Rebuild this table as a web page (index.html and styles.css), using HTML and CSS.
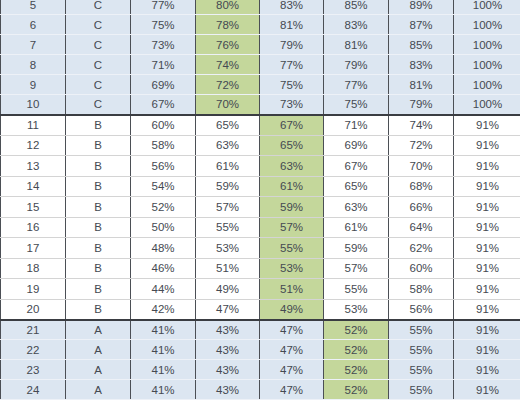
FILE: index.html
```html
<!DOCTYPE html>
<html>
<head>
<meta charset="utf-8">
<link rel="stylesheet" href="styles.css">
</head>
<body>
<div class="sheet">
<table class="grid">
<colgroup>
<col class="c1"><col class="c2"><col class="c3"><col class="c4"><col class="c5"><col class="c6"><col class="c7"><col class="c8">
</colgroup>
<tbody class="band band-c">
<tr><td>5</td><td>C</td><td>77%</td><td class="hi">80%</td><td>83%</td><td>85%</td><td>89%</td><td>100%</td></tr>
<tr><td>6</td><td>C</td><td>75%</td><td class="hi">78%</td><td>81%</td><td>83%</td><td>87%</td><td>100%</td></tr>
<tr><td>7</td><td>C</td><td>73%</td><td class="hi">76%</td><td>79%</td><td>81%</td><td>85%</td><td>100%</td></tr>
<tr><td>8</td><td>C</td><td>71%</td><td class="hi">74%</td><td>77%</td><td>79%</td><td>83%</td><td>100%</td></tr>
<tr><td>9</td><td>C</td><td>69%</td><td class="hi">72%</td><td>75%</td><td>77%</td><td>81%</td><td>100%</td></tr>
<tr><td>10</td><td>C</td><td>67%</td><td class="hi">70%</td><td>73%</td><td>75%</td><td>79%</td><td>100%</td></tr>
</tbody>
<tbody class="band band-b">
<tr><td>11</td><td>B</td><td>60%</td><td>65%</td><td class="hi">67%</td><td>71%</td><td>74%</td><td>91%</td></tr>
<tr><td>12</td><td>B</td><td>58%</td><td>63%</td><td class="hi">65%</td><td>69%</td><td>72%</td><td>91%</td></tr>
<tr><td>13</td><td>B</td><td>56%</td><td>61%</td><td class="hi">63%</td><td>67%</td><td>70%</td><td>91%</td></tr>
<tr><td>14</td><td>B</td><td>54%</td><td>59%</td><td class="hi">61%</td><td>65%</td><td>68%</td><td>91%</td></tr>
<tr><td>15</td><td>B</td><td>52%</td><td>57%</td><td class="hi">59%</td><td>63%</td><td>66%</td><td>91%</td></tr>
<tr><td>16</td><td>B</td><td>50%</td><td>55%</td><td class="hi">57%</td><td>61%</td><td>64%</td><td>91%</td></tr>
<tr><td>17</td><td>B</td><td>48%</td><td>53%</td><td class="hi">55%</td><td>59%</td><td>62%</td><td>91%</td></tr>
<tr><td>18</td><td>B</td><td>46%</td><td>51%</td><td class="hi">53%</td><td>57%</td><td>60%</td><td>91%</td></tr>
<tr><td>19</td><td>B</td><td>44%</td><td>49%</td><td class="hi">51%</td><td>55%</td><td>58%</td><td>91%</td></tr>
<tr><td>20</td><td>B</td><td>42%</td><td>47%</td><td class="hi">49%</td><td>53%</td><td>56%</td><td>91%</td></tr>
</tbody>
<tbody class="band band-a">
<tr><td>21</td><td>A</td><td>41%</td><td>43%</td><td>47%</td><td class="hi">52%</td><td>55%</td><td>91%</td></tr>
<tr><td>22</td><td>A</td><td>41%</td><td>43%</td><td>47%</td><td class="hi">52%</td><td>55%</td><td>91%</td></tr>
<tr><td>23</td><td>A</td><td>41%</td><td>43%</td><td>47%</td><td class="hi">52%</td><td>55%</td><td>91%</td></tr>
<tr><td>24</td><td>A</td><td>41%</td><td>43%</td><td>47%</td><td class="hi">52%</td><td>55%</td><td>91%</td></tr>
</tbody>
</table>
</div>
</body>
</html>
```

FILE: styles.css
```css
html, body {
  margin: 0;
  padding: 0;
  background: #ffffff;
}

.sheet {
  width: 520px;
  height: 400px;
  overflow: hidden;
}

.grid {
  margin-top: -6px;
  border-collapse: collapse;
  table-layout: fixed;
  width: 521px;
  font-family: "Liberation Sans", Arial, sans-serif;
  font-size: 11.5px;
  color: #454a52;
}

.c1, .c2, .c3 { width: 65px; }
.c4, .c5 { width: 64px; }
.c6, .c7 { width: 65px; }
.c8 { width: 68px; }

.grid tr {
  height: 20px;
}

.band-b tr {
  height: 20.5px;
}

.grid td {
  padding: 0;
  text-align: center;
  vertical-align: middle;
  line-height: 14px;
  border-left: 1px solid #4b4f55;
  border-right: 1px solid #4b4f55;
  border-top: 1px solid #d4d4d4;
  border-bottom: 1px solid #d4d4d4;
}

.band-c td,
.band-a td {
  background: #dce6f1;
  border-top-color: #edf1f7;
  border-bottom-color: #edf1f7;
}

.band-b td {
  background: #ffffff;
}

.grid td.hi {
  background: #c4d79b;
}

.band-b tr:first-child td,
.band-a tr:first-child td {
  border-top: 2px solid #3a3d42;
}
```
